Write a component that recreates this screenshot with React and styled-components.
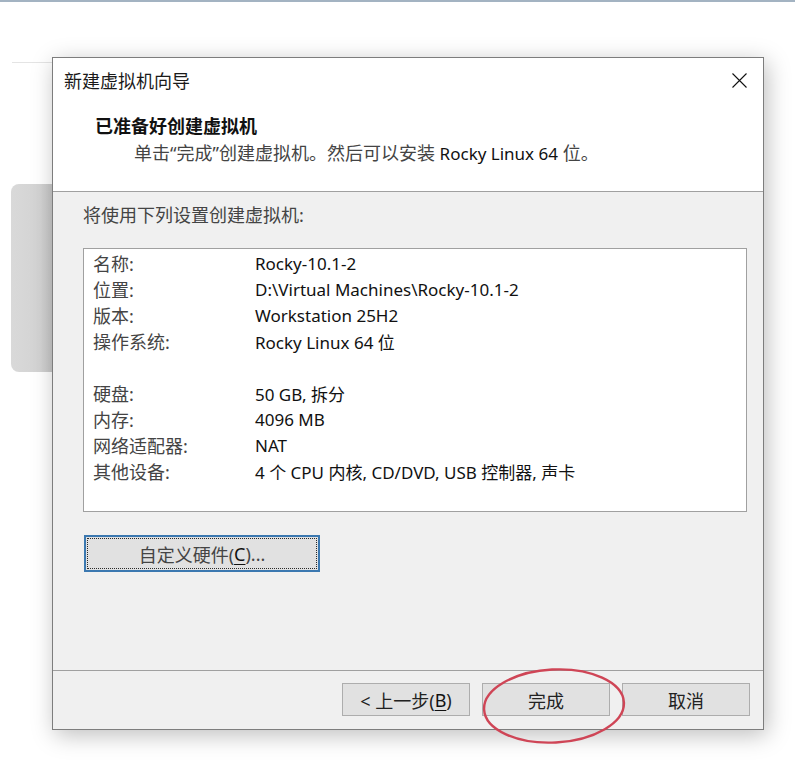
import React from "react";
import styled, { createGlobalStyle } from "styled-components";

const GlobalStyle = createGlobalStyle`
  html, body {
    margin: 0;
    padding: 0;
    background: #fff;
  }
  body {
    font-family: "Noto Sans", "Noto Sans CJK SC", sans-serif;
    color: #111;
  }
`;

const Page = styled.div`
  width: 795px;
  height: 775px;
  box-sizing: border-box;
  border-top: 2px solid #a3b3c2;
  padding-top: 55px;
  display: flex;
  align-items: flex-start;
  overflow: hidden;
`;

const LeftCol = styled.div`
  width: 52px;
  flex-shrink: 0;
  display: flex;
  flex-direction: column;
  align-items: flex-end;
`;

const FaintLine = styled.div`
  margin-top: 5px;
  width: 40px;
  height: 1px;
  background: #e4e4e4;
`;

const GrayTab = styled.div`
  margin-top: 121px;
  width: 41px;
  height: 188px;
  border-radius: 8px 0 0 8px;
  background: linear-gradient(90deg, #d9d9d9 0%, #d3d3d3 70%, #c9c9c9 100%);
`;

const Dialog = styled.div`
  width: 712px;
  height: 673px;
  box-sizing: border-box;
  border: 1px solid #7d7d7d;
  background: #f0f0f0;
  display: flex;
  flex-direction: column;
  box-shadow: 3px 5px 22px rgba(0, 0, 0, 0.26);
`;

const TopArea = styled.div`
  height: 133px;
  background: #fff;
  border-bottom: 1px solid #a0a0a0;
  display: flex;
  flex-direction: column;
`;

const TitleBar = styled.div`
  height: 44px;
  display: flex;
  align-items: center;
  justify-content: space-between;
  padding: 0 16px 0 11px;
`;

const TitleText = styled.span`
  font-family: "Noto Sans CJK SC", sans-serif;
  font-size: 18px;
  color: #1a1a1a;
`;

const CloseBtn = styled.div`
  width: 15px;
  height: 15px;
  display: flex;
`;

const Header = styled.div`
  padding-top: 9px;
  display: flex;
  flex-direction: column;
`;

const HeadTitle = styled.div`
  padding-left: 42px;
  line-height: 28px;
  font-family: "Noto Sans CJK SC", sans-serif;
  font-weight: 700;
  font-size: 18px;
  color: #111;
`;

const HeadSub = styled.div`
  padding-left: 81px;
  line-height: 28px;
  font-size: 18px;
  color: #444;
`;

const Latin = styled.span`
  font-family: "Noto Sans", sans-serif;
  font-size: 17px;
  color: #111;
`;

const Body = styled.div`
  height: 478px;
  box-sizing: border-box;
  padding: 10px 16px 0 30px;
  display: flex;
  flex-direction: column;
  align-items: flex-start;
`;

const Intro = styled.div`
  line-height: 26px;
  font-size: 18px;
  color: #444;
`;

const ListBox = styled.div`
  margin-top: 20px;
  width: 664px;
  height: 264px;
  box-sizing: border-box;
  border: 1px solid #a0a0a0;
  background: #fff;
  padding: 1px 0 0 9px;
  display: flex;
  flex-direction: column;
`;

const Row = styled.div`
  height: 26px;
  display: flex;
  align-items: center;
`;

const Label = styled.span`
  width: 162px;
  flex-shrink: 0;
  font-size: 18px;
  color: #444;
`;

const Value = styled.span`
  font-size: 17px;
  color: #111;
`;

const Button = styled.button`
  width: ${(p) => p.$w || 128}px;
  height: ${(p) => p.$h || 33}px;
  box-sizing: border-box;
  background: #e1e1e1;
  border: 1px solid #adadad;
  border-radius: 0;
  padding: 0;
  margin: 0;
  font-family: "Noto Sans", "Noto Sans CJK SC", sans-serif;
  font-size: 18px;
  color: #222;
  display: flex;
  align-items: center;
  justify-content: center;
`;

const FocusButton = styled(Button)`
  margin-top: 23px;
  margin-left: 1px;
  border: 2px solid #3b78b0;
  outline: 1px dotted #2a2a2a;
  outline-offset: -4px;
  color: #444;
`;

const Ul = styled.u`
  text-decoration-thickness: 1px;
  text-underline-offset: 3px;
  color: #111;
`;

const Footer = styled.div`
  position: relative;
  flex: 1;
  border-top: 1px solid #a0a0a0;
  display: flex;
  justify-content: flex-end;
  align-items: flex-start;
  gap: 12px;
  padding: 12px 13px 0 0;
`;

const Ring = styled.svg`
  position: absolute;
  left: 428px;
  top: -4px;
  overflow: visible;
  pointer-events: none;
`;

const rows = [
  ["名称:", "Rocky-10.1-2"],
  ["位置:", "D:\\Virtual Machines\\Rocky-10.1-2"],
  ["版本:", "Workstation 25H2"],
  ["操作系统:", "Rocky Linux 64 位"],
  null,
  ["硬盘:", "50 GB, 拆分"],
  ["内存:", "4096 MB"],
  ["网络适配器:", "NAT"],
  ["其他设备:", "4 个 CPU 内核, CD/DVD, USB 控制器, 声卡"],
];

export default function App() {
  return (
    <>
      <GlobalStyle />
      <Page>
        <LeftCol>
          <FaintLine />
          <GrayTab />
        </LeftCol>
        <Dialog>
          <TopArea>
            <TitleBar>
              <TitleText>新建虚拟机向导</TitleText>
              <CloseBtn>
                <svg width="15" height="15" viewBox="0 0 15 15">
                  <path d="M0.5 0.5 L14.5 14.5 M14.5 0.5 L0.5 14.5" stroke="#111" strokeWidth="1.1" fill="none" />
                </svg>
              </CloseBtn>
            </TitleBar>
            <Header>
              <HeadTitle>已准备好创建虚拟机</HeadTitle>
              <HeadSub>
                单击“完成”创建虚拟机。然后可以安装 <Latin>Rocky Linux 64</Latin> 位。
              </HeadSub>
            </Header>
          </TopArea>
          <Body>
            <Intro>将使用下列设置创建虚拟机:</Intro>
            <ListBox>
              {rows.map((r, i) =>
                r ? (
                  <Row key={i}>
                    <Label>{r[0]}</Label>
                    <Value>{r[1]}</Value>
                  </Row>
                ) : (
                  <Row key={i} />
                )
              )}
            </ListBox>
            <FocusButton $w={236} $h={37}>
              自定义硬件(<Ul>C</Ul>)...
            </FocusButton>
          </Body>
          <Footer>
            <Button>
              &lt; 上一步(<Ul>B</Ul>)
            </Button>
            <Button>完成</Button>
            <Button>取消</Button>
            <Ring width="146" height="78" viewBox="0 0 146 78">
              <ellipse cx="73" cy="39" rx="70" ry="36.5" fill="none" stroke="#cf4556" strokeWidth="2.4" transform="rotate(-3 73 39)" />
            </Ring>
          </Footer>
        </Dialog>
      </Page>
    </>
  );
}
